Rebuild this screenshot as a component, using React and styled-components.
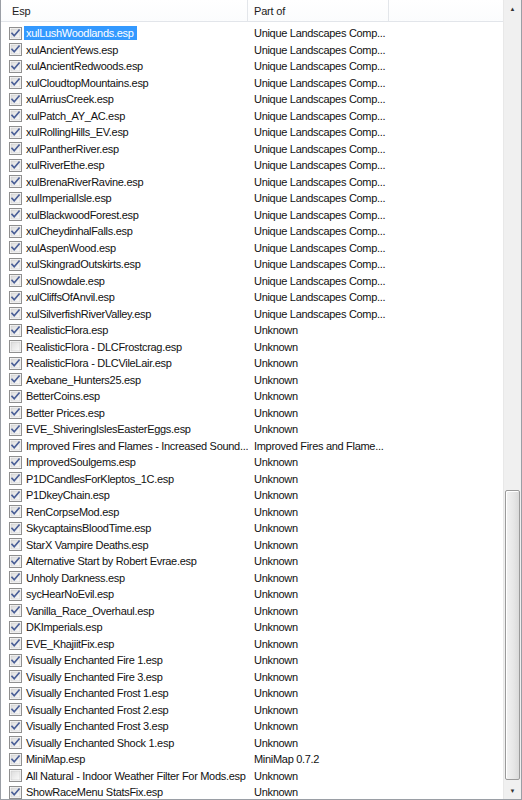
import React from 'react';
import styled, { createGlobalStyle } from 'styled-components';

const GlobalStyle = createGlobalStyle`
  html, body {
    margin: 0;
    padding: 0;
    background: #ffffff;
  }
  body {
    font-family: "Liberation Sans", Arial, sans-serif;
  }
`;

const ULC = 'Unique Landscapes Comp...';

const plugins = [
  ['xulLushWoodlands.esp', ULC, true],
  ['xulAncientYews.esp', ULC, true],
  ['xulAncientRedwoods.esp', ULC, true],
  ['xulCloudtopMountains.esp', ULC, true],
  ['xulArriusCreek.esp', ULC, true],
  ['xulPatch_AY_AC.esp', ULC, true],
  ['xulRollingHills_EV.esp', ULC, true],
  ['xulPantherRiver.esp', ULC, true],
  ['xulRiverEthe.esp', ULC, true],
  ['xulBrenaRiverRavine.esp', ULC, true],
  ['xulImperialIsle.esp', ULC, true],
  ['xulBlackwoodForest.esp', ULC, true],
  ['xulCheydinhalFalls.esp', ULC, true],
  ['xulAspenWood.esp', ULC, true],
  ['xulSkingradOutskirts.esp', ULC, true],
  ['xulSnowdale.esp', ULC, true],
  ['xulCliffsOfAnvil.esp', ULC, true],
  ['xulSilverfishRiverValley.esp', ULC, true],
  ['RealisticFlora.esp', 'Unknown', true],
  ['RealisticFlora - DLCFrostcrag.esp', 'Unknown', false],
  ['RealisticFlora - DLCVileLair.esp', 'Unknown', true],
  ['Axebane_Hunters25.esp', 'Unknown', true],
  ['BetterCoins.esp', 'Unknown', true],
  ['Better Prices.esp', 'Unknown', true],
  ['EVE_ShiveringIslesEasterEggs.esp', 'Unknown', true],
  ['Improved Fires and Flames - Increased Sound...', 'Improved Fires and Flame...', true],
  ['ImprovedSoulgems.esp', 'Unknown', true],
  ['P1DCandlesForKleptos_1C.esp', 'Unknown', true],
  ['P1DkeyChain.esp', 'Unknown', true],
  ['RenCorpseMod.esp', 'Unknown', true],
  ['SkycaptainsBloodTime.esp', 'Unknown', true],
  ['StarX Vampire Deaths.esp', 'Unknown', true],
  ['Alternative Start by Robert Evrae.esp', 'Unknown', true],
  ['Unholy Darkness.esp', 'Unknown', true],
  ['sycHearNoEvil.esp', 'Unknown', true],
  ['Vanilla_Race_Overhaul.esp', 'Unknown', true],
  ['DKImperials.esp', 'Unknown', true],
  ['EVE_KhajiitFix.esp', 'Unknown', true],
  ['Visually Enchanted Fire 1.esp', 'Unknown', true],
  ['Visually Enchanted Fire 3.esp', 'Unknown', true],
  ['Visually Enchanted Frost 1.esp', 'Unknown', true],
  ['Visually Enchanted Frost 2.esp', 'Unknown', true],
  ['Visually Enchanted Frost 3.esp', 'Unknown', true],
  ['Visually Enchanted Shock 1.esp', 'Unknown', true],
  ['MiniMap.esp', 'MiniMap 0.7.2', true],
  ['All Natural - Indoor Weather Filter For Mods.esp', 'Unknown', false],
  ['ShowRaceMenu StatsFix.esp', 'Unknown', true],
];

function CheckBox({ checked }) {
  return (
    <svg width='13' height='13' viewBox='0 0 13 13'>
      <defs>
        <linearGradient id='cbFill' x1='0' y1='0' x2='1' y2='1'>
          <stop offset='0' stopColor='#dcdcdc' />
          <stop offset='1' stopColor='#fbfbfb' />
        </linearGradient>
      </defs>
      <rect x='0.5' y='0.5' width='12' height='12' fill='#fff' stroke='#8f8f8f' />
      <rect x='2' y='2' width='9' height='9' fill='url(#cbFill)' stroke='#c8c8c8' strokeWidth='0.6' />
      {checked && (
        <path
          d='M3 6.4 L5.2 8.8 L10 3.2'
          fill='none'
          stroke='#4a5f97'
          strokeWidth='1.7'
          strokeLinecap='square'
        />
      )}
    </svg>
  );
}

function App() {
  return (
    <>
      <GlobalStyle />
      <Frame>
        <ListArea>
          <Header>
            <HeadCell $width={247}>Esp</HeadCell>
            <HeadCell $width={141}>Part of</HeadCell>
            <HeadFill />
          </Header>
          <Rows>
            {plugins.map(([esp, part, checked], i) => (
              <Row key={esp}>
                <EspCell>
                  <CheckBox checked={checked} />
                  <EspName $selected={i === 0}>{esp}</EspName>
                </EspCell>
                <PartCell>{part}</PartCell>
              </Row>
            ))}
          </Rows>
        </ListArea>
        <ScrollBar>
          <Arrow>▲</Arrow>
          <Track>
            <Thumb />
          </Track>
          <Arrow>▼</Arrow>
        </ScrollBar>
      </Frame>
    </>
  );
}

export default App;

const Frame = styled.div`
  width: 522px;
  height: 800px;
  box-sizing: border-box;
  border: 1px solid #9a9ea5;
  border-top: none;
  display: flex;
  overflow: hidden;
  background: #ffffff;
`;

const ListArea = styled.div`
  flex: 1;
  display: flex;
  flex-direction: column;
  min-width: 0;
`;

const Header = styled.div`
  height: 22px;
  flex: none;
  display: flex;
  box-sizing: border-box;
  border-bottom: 1px solid #e2e5ea;
  background: linear-gradient(#ffffff, #fbfcfd);
`;

const HeadCell = styled.div`
  width: ${(p) => p.$width}px;
  flex: none;
  box-sizing: border-box;
  border-right: 1px solid #e3e6ea;
  padding-left: ${(p) => (p.$width > 200 ? 11 : 6)}px;
  font-size: 11px;
  letter-spacing: -0.2px;
  color: #1c1c1c;
  line-height: 22px;
`;

const HeadFill = styled.div`
  flex: 1;
`;

const Rows = styled.div`
  display: flex;
  flex-direction: column;
  padding-top: 3px;
`;

const Row = styled.div`
  height: 16.5px;
  display: flex;
  align-items: center;
  font-size: 11px;
  letter-spacing: -0.3px;
  color: #111;
  white-space: nowrap;
`;

const EspCell = styled.div`
  width: 247px;
  flex: none;
  display: flex;
  align-items: center;
  padding-left: 8px;
  box-sizing: border-box;
  overflow: hidden;

  svg {
    flex: none;
  }
`;

const EspName = styled.span`
  margin-left: 2px;
  padding: 1px 3px 1px 2px;
  background: ${(p) => (p.$selected ? '#3399ff' : 'transparent')};
  color: ${(p) => (p.$selected ? '#ffffff' : 'inherit')};
`;

const PartCell = styled.div`
  width: 141px;
  flex: none;
  padding-left: 6px;
  box-sizing: border-box;
`;

const ScrollBar = styled.div`
  width: 17px;
  flex: none;
  display: flex;
  flex-direction: column;
  background: #f0f0f0;
  border-left: 1px solid #e8e8e8;
`;

const Arrow = styled.div`
  height: 17px;
  flex: none;
  display: flex;
  align-items: center;
  justify-content: center;
  font-size: 6px;
  color: #333;
`;

const Track = styled.div`
  flex: 1;
  display: flex;
  flex-direction: column;
  justify-content: flex-end;
  padding: 0 1px 2px;
`;

const Thumb = styled.div`
  height: 290px;
  box-sizing: border-box;
  border: 1px solid #9a9a9a;
  border-radius: 2px;
  background: linear-gradient(90deg, #f2f2f2, #e6e6e6 60%, #dadada);
  box-shadow: inset 1px 1px 0 #ffffff;
`;
